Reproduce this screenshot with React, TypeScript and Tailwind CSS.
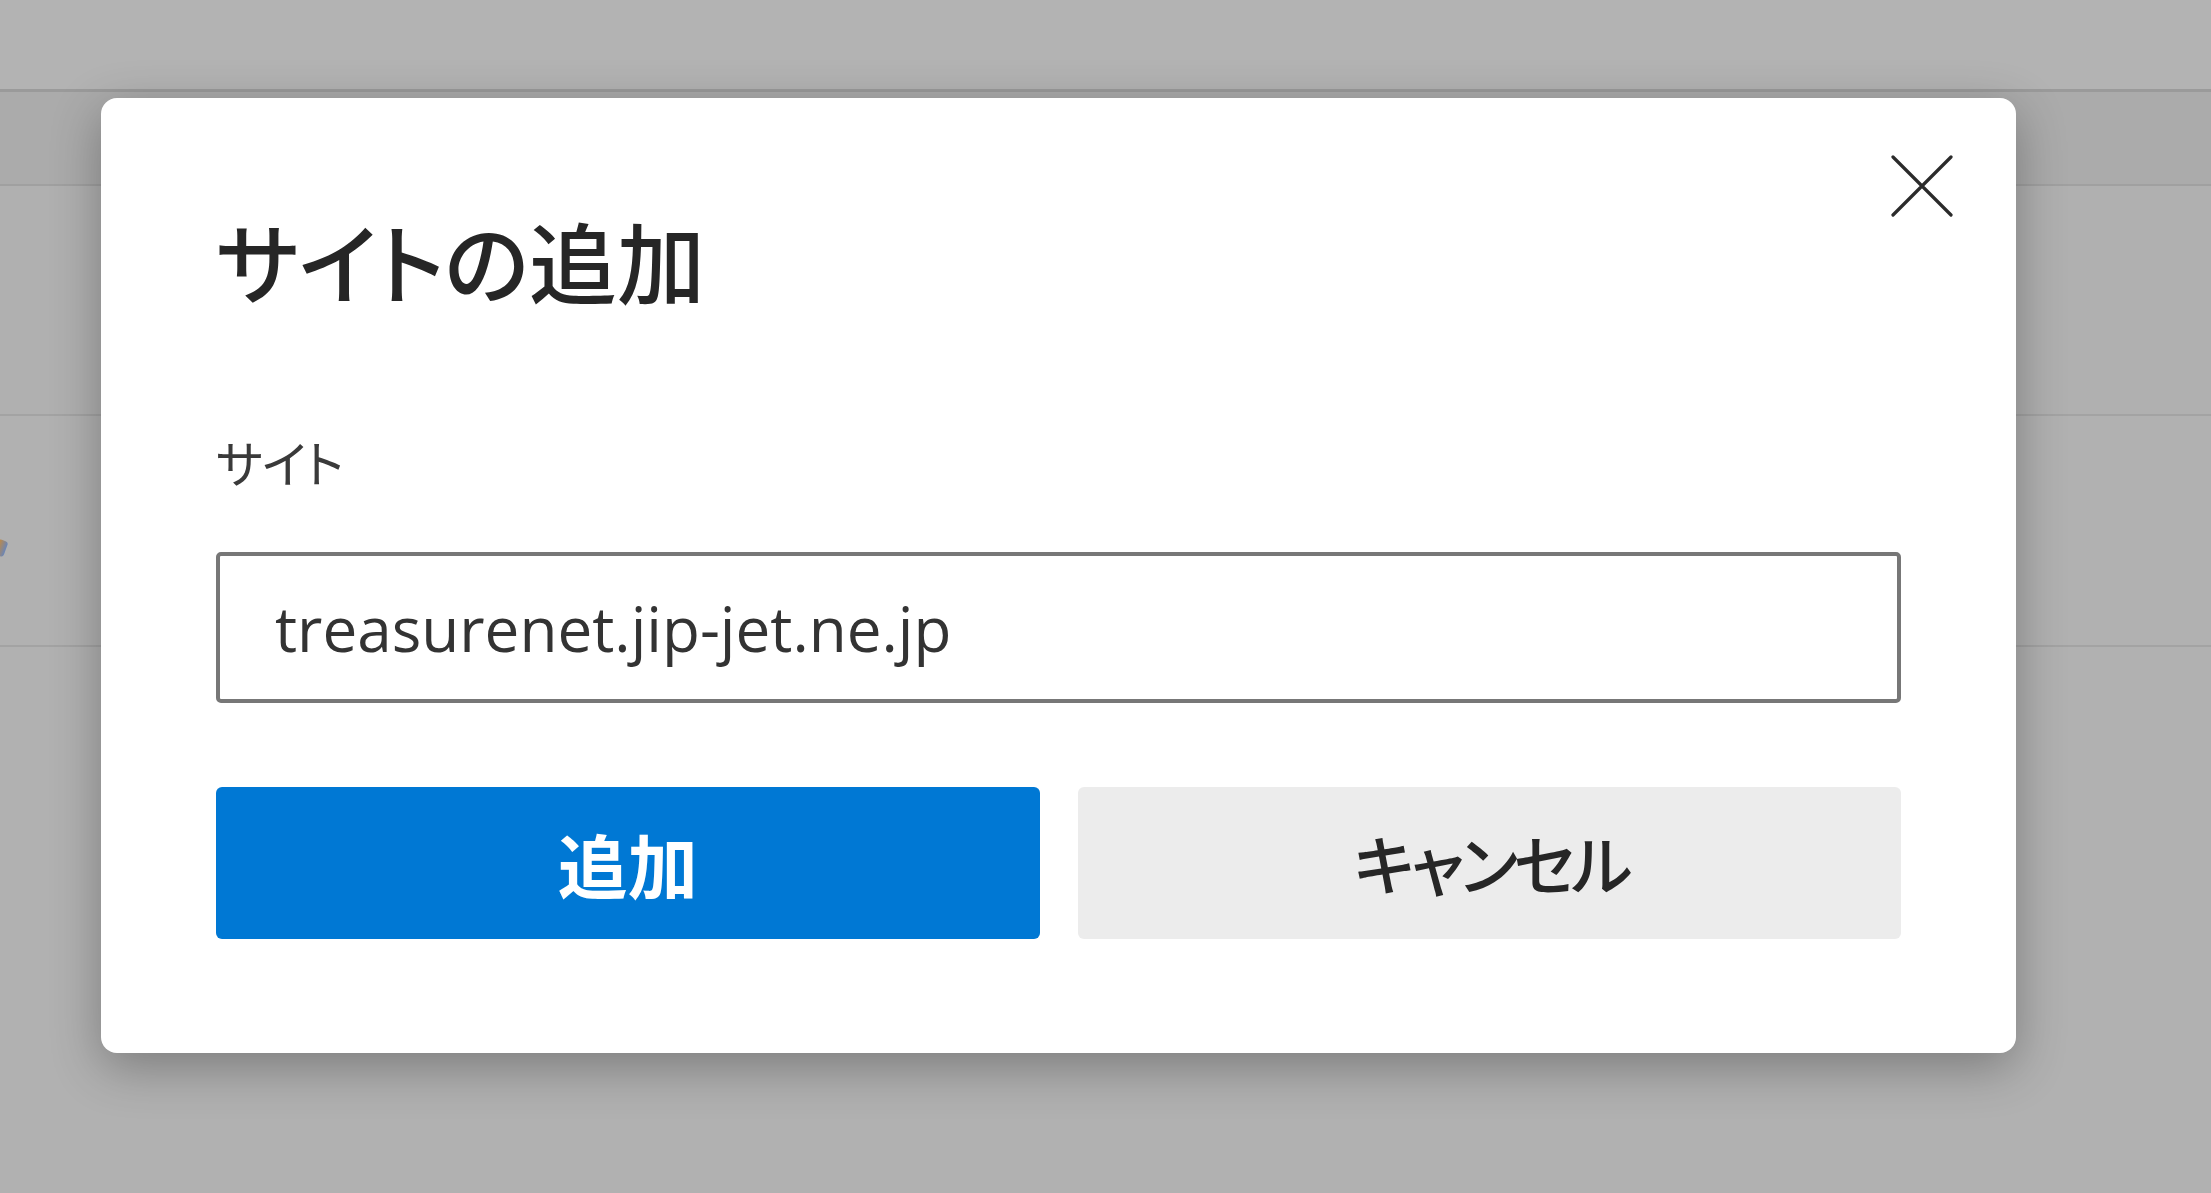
import React from "react";

export default function App() {
  return (
    <div className="relative w-[2211px] h-[1193px] overflow-hidden bg-[#b1b1b1] font-['Noto_Sans_CJK_JP',sans-serif]">
      {/* dimmed page behind the dialog */}
      <div className="flex flex-col w-full">
        <div className="h-[92px] bg-[#b3b3b3] border-b-[3px] border-[#9a9a9a]" />
        <div className="h-[94px] bg-[#ababab] border-b-[2px] border-[#a0a0a0]" />
        <div className="h-[230px] bg-[#b0b0b0] border-b-[2px] border-[#a3a3a3]" />
        <div className="relative h-[231px] bg-[#b1b1b1] border-b-[2px] border-[#a3a3a3]">
          <div className="absolute left-[-4px] top-[124px] w-[10px] h-[16px] rounded-[3px] bg-[linear-gradient(90deg,#c88a3a,#6a86b8)] rotate-[20deg]" />
        </div>
        <div className="flex-1 bg-[#b1b1b1]" />
      </div>

      {/* dialog */}
      <div className="absolute left-[101px] top-[98px] w-[1915px] h-[955px] rounded-[16px] bg-white shadow-[0_14px_50px_rgba(0,0,0,0.3)] flex flex-col px-[115px] pt-[117px]">
        <button className="absolute right-[63px] top-[57px] w-[62px] h-[62px] flex items-center justify-center">
          <svg width="62" height="62" viewBox="0 0 62 62" fill="none">
            <path d="M2 2L60 60M60 2L2 60" stroke="#2b2b2b" strokeWidth="3.2" strokeLinecap="round" />
          </svg>
        </button>

        <h1 className="text-[88px] leading-[88px] font-medium text-[#262626] [font-feature-settings:'palt']">
          サイトの追加
        </h1>

        <div className="mt-[133px] text-[50px] leading-[50px] font-normal text-[#3a3a3a] [font-feature-settings:'palt'] tracking-[-1px]">
          サイト
        </div>

        <div className="mt-[66px] h-[151px] rounded-[5px] border-[4px] border-[#777777] flex items-center pl-[55px]">
          <span className="font-['Open_Sans',sans-serif] text-[62px] text-[#333333] leading-none">
            treasurenet.jip-jet.ne.jp
          </span>
        </div>

        <div className="mt-[84px] grid grid-cols-2 gap-[38px]">
          <button className="h-[152px] rounded-[6px] bg-[#0078d4] text-white text-[70px] font-bold flex items-center justify-center [font-feature-settings:'palt']">
            追加
          </button>
          <button className="h-[152px] rounded-[6px] bg-[#ececec] text-[#262626] text-[65px] font-medium flex items-center justify-center [font-feature-settings:'palt'] tracking-[-4px] pl-[4px]">
            キャンセル
          </button>
        </div>
      </div>
    </div>
  );
}
